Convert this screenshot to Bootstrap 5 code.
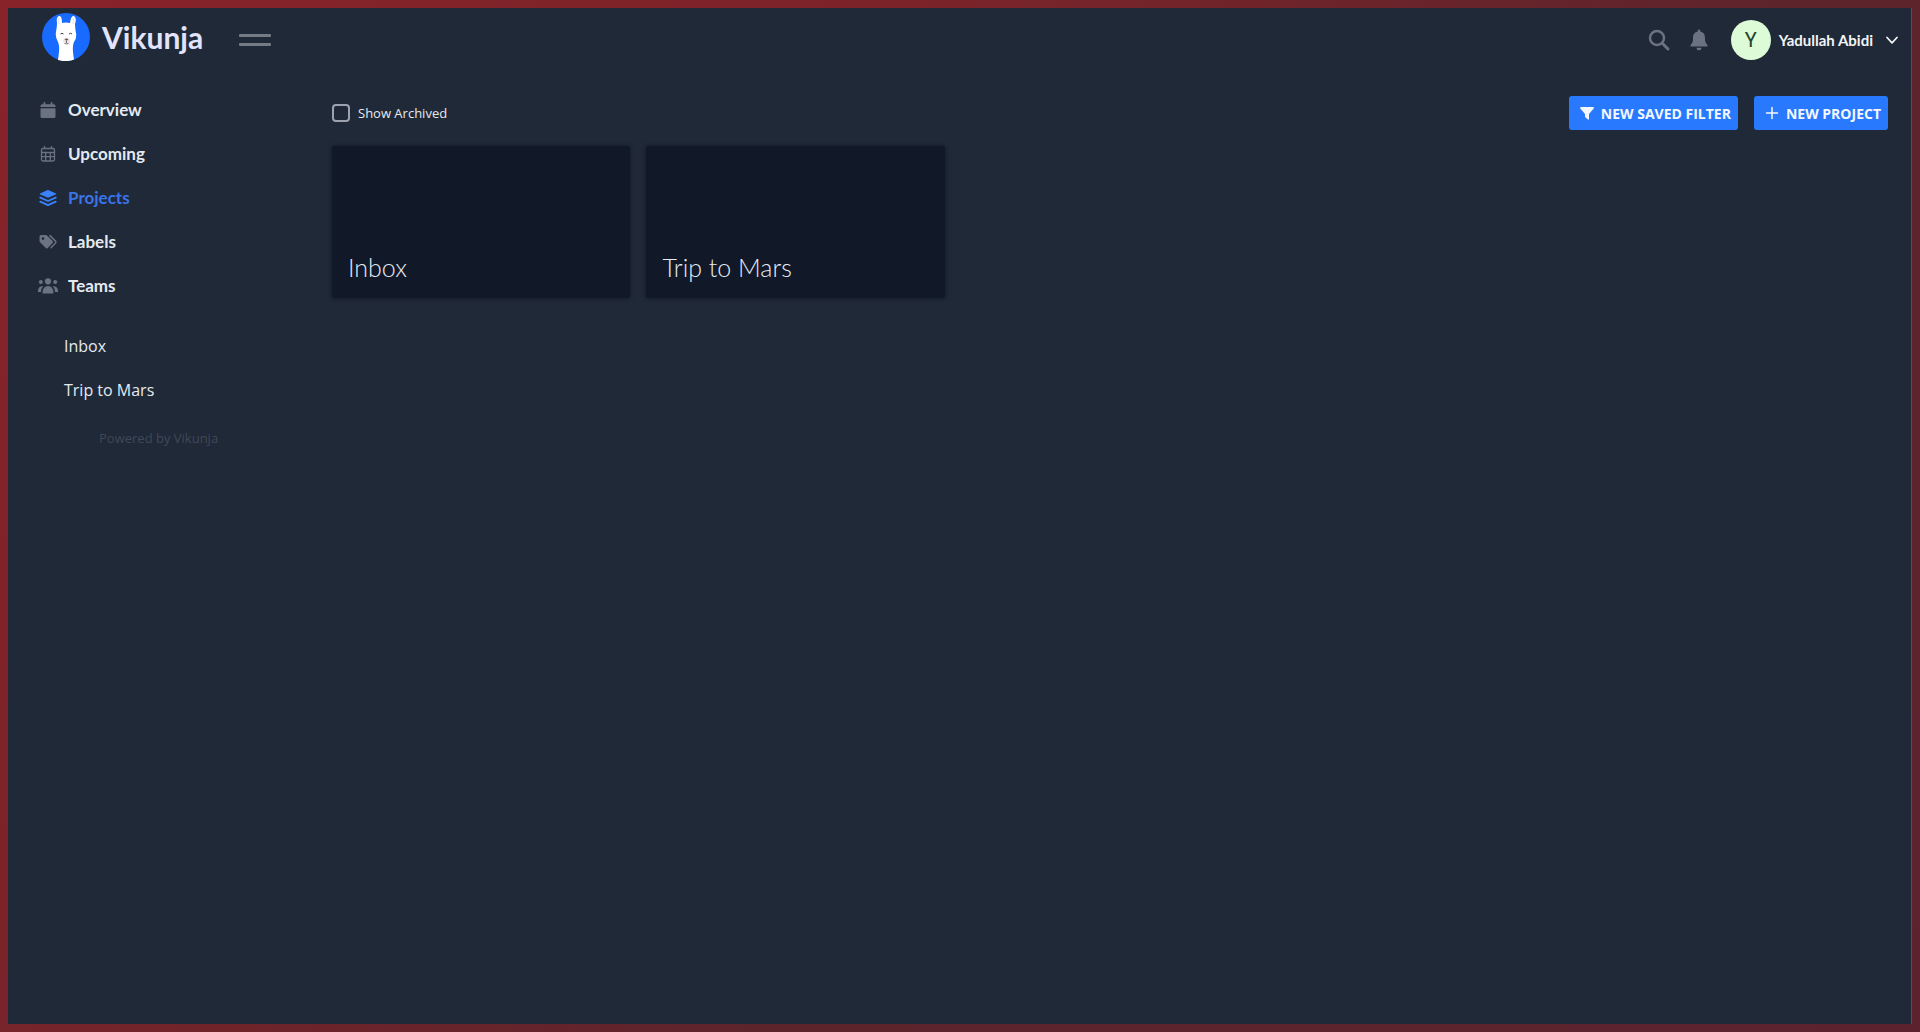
<!DOCTYPE html>
<html lang="en">
<head>
<meta charset="utf-8">
<meta name="viewport" content="width=device-width, initial-scale=1">
<title>Projects | Vikunja</title>
<link href="https://cdn.jsdelivr.net/npm/bootstrap@5.3.0/dist/css/bootstrap.min.css" rel="stylesheet">
<style>
  body { font-family: "Open Sans", "Noto Sans", sans-serif; color: #e5e9f2; background: #5e242c; }
  .page-frame { padding: 8px; background: linear-gradient(135deg, #88232a 0, #7c2329 30%, #5e242c 60%, #5c232e 100%); }
  .page-body { background: #1f2937; border-right: 1px solid #4a5264; }
  .display-face { font-family: Lato, "Open Sans", sans-serif; }

  .top-bar { height: 64px; padding: 0 12px 0 34px; }
  .brand { gap: 12px; color: #e1e4fc; font-size: 30px; line-height: 44px; font-weight: 700; }
  .brand svg { width: 48px; height: 48px; }
  .brand-row { gap: 36px; padding-bottom: 6px; }
  .menu-toggle { margin-top: 6px; gap: 6px; }
  .menu-toggle span { width: 32px; height: 3px; border-radius: 1px; background: #747a86; }
  .grey-icon { color: #6b7280; }
  .avatar { width: 40px; height: 40px; background: #defbd8; color: #26422a; font-size: 20px; font-family: Roboto, sans-serif; }
  .user-name { font-size: 15px; font-weight: 700; color: #f3f4f6; }

  .side-nav { width: 292px; padding: 16px 0 0 28px; }
  .side-nav .nav-link { height: 44px; padding: 0; color: #e5e9f2; font-size: 16px; }
  .side-nav .main-link { gap: 8px; font-size: 17px; font-weight: 700; }
  .side-nav .main-link svg { width: 24px; height: 18px; color: #6b7280; }
  .side-nav .main-link.active { color: #3b74e8; }
  .side-nav .main-link.active svg { color: #3a82fb; }
  .project-links { padding: 16px 0 0 28px; }
  .powered { padding: 16px 0 0 63px; font-size: 13px; line-height: 20px; }
  .powered a { color: #3f4857; }

  .main-area { padding: 24px 23px 24px 32px; }
  .archive-check { width: 18px; height: 18px; background-color: transparent; border: 2px solid #9ca3af; border-radius: 3px; }
  .archive-label { font-size: 13px; line-height: 20px; }
  .btn-action { height: 34px; padding: 0 7px 0 9px; gap: 5px; border: 0; border-radius: 3px; background: #2979ff; color: #f3f8ff; font-size: 14px; font-weight: 700; }
  .btn-action:hover { background: #1d6bee; color: #fff; }
  .btn-action svg { width: 18px; height: 16px; }
  .btn-action svg.plus-sign { height: 15px; }
  .project-grid { --bs-gutter-x: 16px; --bs-gutter-y: 16px; }
  .project-tile { min-height: 152px; padding: 15px 16px; background: #111827; border-radius: 2px; box-shadow: 0 0 4px #111827; color: #e5e9f5; font-size: 25px; line-height: 32px; font-weight: 300; }
</style>
</head>
<body>
<div class="page-frame min-vh-100 d-flex">
  <div class="page-body flex-grow-1 d-flex flex-column">
    <header class="top-bar d-flex align-items-center justify-content-between">
      <div class="brand-row d-flex align-items-center">
        <a class="brand display-face d-flex align-items-center text-decoration-none" href="#">
          <svg viewBox="0 0 48 48" aria-hidden="true">
            <circle cx="24" cy="24" r="24" fill="#196aff"/>
            <path d="M16 47 C17 39 18 34 16 29 Q13 24 14 19 Q15 14 15 10 Q14 4 17 3 Q20 2 20 10 Q24 9 28 10 Q29 2 32 3 Q35 5 33 11 Q33 15 34 20 Q35 25 32 29 C30 34 31 40 32 46.600 Q24 49.500 16 47Z" fill="#fff"/>
            <path d="M17 5 Q16 8 17 11 M31 5 Q32 8 31 11" stroke="#e5dce5" fill="none"/>
            <path d="M18.500 21 q1.500-1.500 3 0 M27 21 q1.500-1.500 3 0" stroke="#45404b" stroke-width="1" fill="none"/>
            <ellipse cx="24.500" cy="28" rx="3.500" ry="3" fill="#eee5e2"/>
            <path d="M22.500 26 q2-1 4 0 l-2 2z" fill="#62545a"/>
            <path d="M24.500 28 v2 M22.500 30.500 q2 .8 4 0" stroke="#62545a" stroke-width=".8" fill="none"/>
          </svg>
          <span>Vikunja</span>
        </a>
        <button type="button" class="menu-toggle btn p-0 border-0 d-flex flex-column" aria-label="Toggle menu"><span></span><span></span></button>
      </div>
      <div class="d-flex align-items-center">
        <button type="button" class="btn p-0 border-0 grey-icon d-flex me-3" aria-label="Search">
          <svg width="24" height="24" viewBox="0 0 24 24" fill="none" stroke="currentColor"><circle cx="10" cy="10" r="7" stroke-width="2.500"/><path d="M15.300 15.300 L21 21" stroke-width="3" stroke-linecap="round"/></svg>
        </button>
        <button type="button" class="btn p-0 border-0 grey-icon d-flex" aria-label="Notifications">
          <svg width="24" height="24" viewBox="0 0 24 24" fill="currentColor"><path d="M12 1.500a1.300 1.300 0 0 0-1.300 1.300v.8C7.700 4.200 6 6.600 6 9.500v2c0 2.400-1 3.800-2.300 5.200-.7.800-.2 1.800.8 1.800h15c1 0 1.500-1 .8-1.800C19 15.300 18 13.900 18 11.500v-2c0-2.900-1.700-5.300-4.700-5.900v-.8A1.300 1.300 0 0 0 12 1.500zM9.500 19.800h5a2.500 2.500 0 0 1-5 0z"/></svg>
        </button>
        <button type="button" class="btn p-0 border-0 d-flex align-items-center gap-2 ms-3 ps-1">
          <span class="avatar rounded-circle d-flex align-items-center justify-content-center">Y</span>
          <span class="user-name display-face">Yadullah Abidi</span>
          <svg class="ms-1" width="14" height="14" viewBox="0 0 14 14" fill="none" stroke="#eef0f5" stroke-width="1.800" stroke-linecap="round" stroke-linejoin="round" aria-hidden="true"><path d="M2 4.500 L7 9.800 L12 4.500"/></svg>
        </button>
      </div>
    </header>

    <div class="d-flex flex-grow-1">
      <aside class="side-nav flex-shrink-0">
        <nav class="nav flex-column display-face" aria-label="Main">
          <a class="nav-link main-link d-flex align-items-center" href="#">
            <svg viewBox="0 0 24 18" fill="currentColor"><path d="M4.500 6V5q0-1.700 1.700-1.700H7.500V1.800a.9.900 0 0 1 1.800 0v1.500h5.400V1.800a.9.900 0 0 1 1.800 0v1.500h1.300q1.700 0 1.700 1.700v1zM4.500 7.200h15V15.500q0 1.500-1.500 1.500H6q-1.500 0-1.500-1.500z"/></svg>Overview</a>
          <a class="nav-link main-link d-flex align-items-center" href="#">
            <svg viewBox="0 0 24 18" fill="none" stroke="currentColor" stroke-width="1.300"><rect x="5.500" y="3.500" width="13" height="12.500" rx="1.500"/><path d="M5.500 7.500h13M5.500 11.700h13M9.700 7.500V16M14.300 7.500V16M8.500 1v3M15.500 1v3"/></svg>Upcoming</a>
          <a class="nav-link main-link active d-flex align-items-center" aria-current="page" href="#">
            <svg viewBox="0 0 24 18" fill="currentColor"><path d="M11.300 1.200q.7-.3 1.400 0l7.300 3.200q.8.400 0 .8l-7.300 3.200q-.7.300-1.400 0L4 5.200q-.8-.4 0-.8z"/><path d="M4.300 8.600l7.700 3.400 7.700-3.400M4.300 12.700l7.700 3.400 7.700-3.400" fill="none" stroke="currentColor" stroke-width="1.900" stroke-linecap="round" stroke-linejoin="round"/></svg>Projects</a>
          <a class="nav-link main-link d-flex align-items-center" href="#">
            <svg viewBox="0 0 24 18" fill="currentColor"><path fill-rule="evenodd" d="M3.500 3.500Q3.500 2 5 2h4.700q.8 0 1.300.5l5.600 5.600q1 1 0 2l-4.800 4.800q-1 1-2 0L4 9.300q-.5-.5-.5-1.300zM7 4.300a1.300 1.300 0 1 0 0 2.600 1.300 1.300 0 0 0 0-2.600z"/><path d="M14 2.600l5.500 5.500q.9 1 0 2L15 14.800" fill="none" stroke="currentColor" stroke-width="1.500" stroke-linecap="round"/></svg>Labels</a>
          <a class="nav-link main-link d-flex align-items-center" href="#">
            <svg viewBox="0 0 24 18" fill="currentColor"><circle cx="12" cy="4.300" r="3.100"/><circle cx="4.800" cy="5" r="2"/><circle cx="19.200" cy="5" r="2"/><path d="M6.500 16.500Q6.500 9 12 9t5.500 7.500zM1.800 15q0-6 5.400-6Q5 11.500 5 15zM22.200 15q0-6-5.400-6Q19 11.500 19 15z"/></svg>Teams</a>
        </nav>
        <nav class="nav flex-column project-links" aria-label="Projects">
          <a class="nav-link d-flex align-items-center" href="#">Inbox</a>
          <a class="nav-link d-flex align-items-center" href="#">Trip to Mars</a>
        </nav>
        <div class="powered"><a class="text-decoration-none" href="#">Powered by Vikunja</a></div>
      </aside>

      <main class="main-area flex-grow-1">
        <div class="d-flex justify-content-between align-items-center mb-3">
          <div class="d-flex align-items-center gap-2">
            <input class="form-check-input archive-check m-0" type="checkbox" id="showArchived">
            <label class="archive-label" for="showArchived">Show Archived</label>
          </div>
          <div class="d-flex gap-3">
            <button type="button" class="btn btn-action d-flex align-items-center">
              <svg viewBox="0 0 18 16" fill="currentColor" aria-hidden="true"><path d="M3 2h12q1 0 1 .9l-.3.600L11 9v5q0 1-.9.500L7.500 12.500Q7 12.200 7 11.500V9L2.300 3.500Q1.700 2 3 2z"/></svg>NEW SAVED FILTER</button>
            <button type="button" class="btn btn-action d-flex align-items-center">
              <svg class="plus-sign" viewBox="0 0 18 15" fill="none" stroke="currentColor" stroke-width="1.500" stroke-linecap="round" aria-hidden="true"><path d="M9 1.500v11M3.500 7h11"/></svg>NEW PROJECT</button>
          </div>
        </div>
        <div class="row row-cols-1 row-cols-md-3 row-cols-xl-5 project-grid">
          <div class="col"><a class="project-tile display-face d-flex align-items-end text-decoration-none" href="#">Inbox</a></div>
          <div class="col"><a class="project-tile display-face d-flex align-items-end text-decoration-none" href="#">Trip to Mars</a></div>
        </div>
      </main>
    </div>
  </div>
</div>
<script src="https://cdn.jsdelivr.net/npm/bootstrap@5.3.0/dist/js/bootstrap.bundle.min.js"></script>
</body>
</html>
